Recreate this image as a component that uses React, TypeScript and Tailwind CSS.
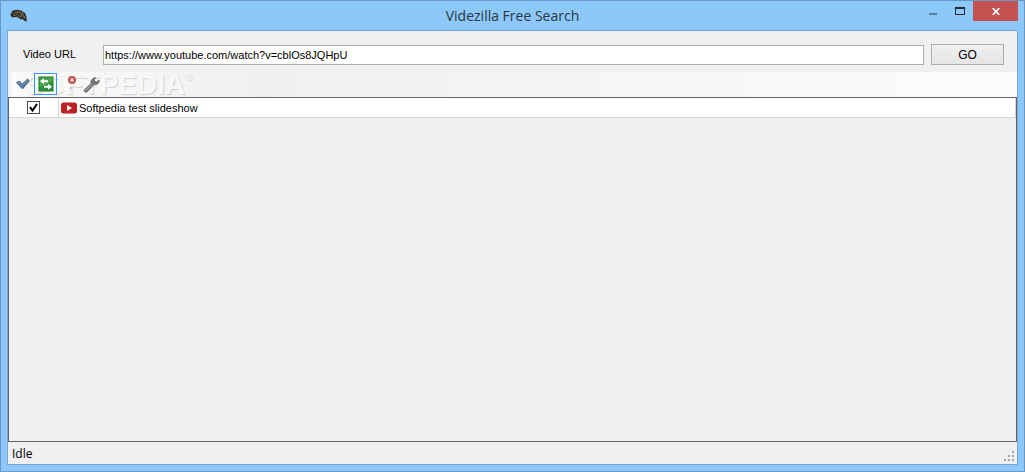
import { useState } from "react";
import type { FormEvent, ReactNode } from "react";

interface Video {
  id: number;
  title: string;
  checked: boolean;
}

function AppIcon() {
  return (
    <svg width="18" height="14" viewBox="0 0 18 14" aria-hidden="true">
      <path d="M1 4 3 1.500 7 .8l4 .7 4 2.500 1.500 4 .2 4.500-2-.5-2.200-2-2 .5-2-2-4-.5-2 .5-2-2z" fill="#2b2721" />
      <path d="M2 4.500 6 4l5 4M5 2l5 2 4 5M9 2l4 3 2.500 5M3 6.500h3l2 1.500" stroke="#6f6450" strokeWidth="1" fill="none" />
      <path d="M7 3h1M11 6h1M12 4h1M10 8h1M14 8h1" stroke="#a2967c" strokeWidth="1" />
    </svg>
  );
}

function CheckIcon() {
  return (
    <svg width="16" height="16" viewBox="0 0 16 16" aria-hidden="true">
      <path d="M1.500 6.500 4.500 5l2.700 3L12.500 3l2 1.800L7.500 13z" fill="#54779c" stroke="#416388" strokeWidth="0.800" strokeLinejoin="round" />
      <path d="M3 6.600 4.300 6l2.900 3.400L12.500 4" stroke="#86a3bf" strokeWidth="0.800" fill="none" />
    </svg>
  );
}

function SwapIcon() {
  return (
    <svg width="16" height="16" viewBox="0 0 16 16" aria-hidden="true">
      <rect x="1" y="1" width="14" height="14" fill="#2f9137" stroke="#247a2b" />
      <path d="M1.500 1.500h13v4l-13 6z" fill="#5bb35c" opacity="0.600" />
      <path d="M6 2.200 2 5.200l4 3v-2h4v-2H6z" fill="#fff" />
      <path d="m10 7.800 4 3-4 3v-2H6v-2h4z" fill="#fff" />
    </svg>
  );
}

function ClearIcon() {
  return (
    <svg width="16" height="16" viewBox="0 0 16 16" aria-hidden="true">
      <path d="M1 1h12v9l-4 5H1z" fill="#fafafa" stroke="#ededed" />
      <path d="m8.500 14.500.5-3.500 3.500-.5z" fill="#c4c4c4" />
      <circle cx="11" cy="3.900" r="3.700" fill="#c9453b" stroke="#a9352e" strokeWidth="0.600" />
      <path d="m9.400 2.300 3.200 3.200m0-3.200L9.400 5.500" stroke="#fff" strokeWidth="1.200" />
    </svg>
  );
}

function WrenchIcon() {
  return (
    <svg width="17" height="17" viewBox="0 0 17 17" aria-hidden="true">
      <path
        d="M1 14.200 8 7.500C7.500 5 8.800 2.500 11.800 1.500l1 .2-1.500 2 .4 1.800 1.900.3 2.200-1.700.6.8c-.3 2.700-2.600 4-5.200 3.700L4 16l-2 .2z"
        fill="#777"
        stroke="#515151"
        strokeWidth="0.600"
      />
      <path d="m2.500 14.500 7-6.500" stroke="#b8b8b8" strokeWidth="0.900" />
    </svg>
  );
}

function VideoIcon() {
  return (
    <svg width="16" height="12" viewBox="0 0 16 12" aria-hidden="true">
      <rect y="0.500" width="16" height="11" rx="2.500" fill="#bd1f22" />
      <path d="M6 3v6l5-3z" fill="#fff" />
    </svg>
  );
}

function ToolButton({ label, active, children }: { label: string; active?: boolean; children: ReactNode }) {
  return (
    <button
      type="button"
      aria-label={label}
      className={
        active
          ? "z-10 flex h-[22px] w-[23px] items-center justify-center border border-[#3399ff]"
          : "z-10 flex h-[22px] w-[23px] items-center justify-center border border-transparent"
      }
    >
      {children}
    </button>
  );
}

function TitleBar() {
  return (
    <header className="grid h-[29px] grid-cols-[1fr_auto_1fr] items-start px-[6px]">
      <div className="pt-[8px] pl-[3px]">
        <AppIcon />
      </div>
      <h1 className="pt-[5px] font-['Open_Sans',sans-serif] text-[14px] leading-5 text-[#2b3640]">
        Videzilla Free Search
      </h1>
      <div className="flex justify-end">
        <button type="button" aria-label="Minimize" className="flex h-5 w-[27px] items-center justify-center">
          <svg width="8" height="10" viewBox="0 0 8 10">
            <path d="M0 7h8v2H0z" fill="#5f7f9b" />
          </svg>
        </button>
        <button type="button" aria-label="Maximize" className="flex h-5 w-[27px] items-center justify-center">
          <svg width="10" height="8" viewBox="0 0 10 8">
            <path d="M0 0h10v8H0zM1 2v5h8V2z" fill="#1f2933" fillRule="evenodd" />
          </svg>
        </button>
        <button type="button" aria-label="Close" className="flex h-5 w-[45px] items-center justify-center bg-[#c75050]">
          <svg width="8" height="7" viewBox="0 0 8 7">
            <path d="m.7 0 6.600 7M7.300 0 .7 7" stroke="#fff" strokeWidth="1.700" />
          </svg>
        </button>
      </div>
    </header>
  );
}

function Toolbar() {
  return (
    <div className="relative ml-[3px] flex h-[25px] items-start bg-linear-to-r from-[#fafafa] via-[#f0f0f0] via-25% to-[#fcfcfc] pt-px">
      <ToolButton label="Check all">
        <CheckIcon />
      </ToolButton>
      <ToolButton label="Invert selection" active>
        <SwapIcon />
      </ToolButton>
      <ToolButton label="Clear list">
        <ClearIcon />
      </ToolButton>
      <ToolButton label="Settings">
        <WrenchIcon />
      </ToolButton>
      <div className="ml-[2px] h-5 w-px bg-[#d4d4d4]" />
      <div className="pointer-events-none absolute top-0 left-[14px] flex font-['Liberation_Sans',Arial,sans-serif] font-bold text-[#f8f8f8] [text-shadow:1px_1px_1px_#00000026]">
        <span className="text-[28px] leading-[25px]">SOFTPEDIA</span>
        <span className="text-[10px] leading-[10px]">®</span>
      </div>
    </div>
  );
}

function StatusBar() {
  return (
    <footer className="flex h-[22px] items-center justify-between pr-[2px] pl-1">
      <span className="pt-px font-['Open_Sans',sans-serif] text-[12px] leading-4">Idle</span>
      <svg width="11" height="11" viewBox="0 0 11 11" className="mt-[6px]" aria-hidden="true">
        <path d="M8 0h2v2H8zM4 4h2v2H4zM8 4h2v2H8zM0 8h2v2H0zM4 8h2v2H4zM8 8h2v2H8z" fill="#a5a5a5" />
      </svg>
    </footer>
  );
}

export default function App() {
  const [url, setUrl] = useState("https://www.youtube.com/watch?v=cblOs8JQHpU");
  const [videos, setVideos] = useState<Video[]>([{ id: 1, title: "Softpedia test slideshow", checked: true }]);

  const handleSubmit = (e: FormEvent) => {
    e.preventDefault();
  };

  const toggle = (id: number) => {
    setVideos(videos.map((v) => (v.id === id ? { ...v, checked: !v.checked } : v)));
  };

  return (
    <div className="flex min-h-screen flex-col border border-[#6b98c2] bg-[#8dc8fa] px-[6px] pb-[6px] font-['Liberation_Sans',Arial,sans-serif] text-[11px] text-black">
      <div className="-mx-[6px]">
        <TitleBar />
      </div>
      <main className="flex flex-1 flex-col border border-[#73a9d8] bg-[#f0f0f0]">
        <form onSubmit={handleSubmit} className="flex h-[41px] items-center pt-[6px] pr-[13px] pl-[15px]">
          <label htmlFor="url" className="w-[80px]">
            Video URL
          </label>
          <input
            id="url"
            type="text"
            value={url}
            onChange={(e) => setUrl(e.target.value)}
            className="h-5 min-w-0 flex-1 border border-[#abadb3] bg-white px-px outline-none"
          />
          <button
            type="submit"
            className="ml-[7px] h-[21px] w-[73px] border border-[#acacac] bg-linear-to-b from-[#f0f0f0] to-[#e5e5e5] text-[12px]"
          >
            GO
          </button>
        </form>
        <Toolbar />
        <div className="flex-1 border border-[#646464]">
          <table className="w-full border-separate border-spacing-0 leading-4">
            <tbody>
              {videos.map((video) => (
                <tr key={video.id} className="bg-white">
                  <td className="h-5 w-[50px] border-r border-b border-[#d5d5d5] p-0">
                    <div className="flex justify-center">
                      <span className="relative flex size-[13px]">
                        <input
                          id={`video-${video.id}`}
                          type="checkbox"
                          checked={video.checked}
                          onChange={() => toggle(video.id)}
                          className="peer size-[13px] appearance-none border border-[#4a4a4a] bg-white"
                        />
                        <svg
                          viewBox="0 0 13 13"
                          className="pointer-events-none absolute inset-0 hidden peer-checked:block"
                          aria-hidden="true"
                        >
                          <path d="m3 6 2.500 3.500L10 3" stroke="#000" strokeWidth="2" fill="none" />
                        </svg>
                      </span>
                    </div>
                  </td>
                  <td className="h-5 border-r border-b border-[#d5d5d5] p-0">
                    <label htmlFor={`video-${video.id}`} className="flex items-center gap-[2px] pl-[2px]">
                      <VideoIcon />
                      {video.title}
                    </label>
                  </td>
                </tr>
              ))}
            </tbody>
          </table>
        </div>
        <StatusBar />
      </main>
    </div>
  );
}
